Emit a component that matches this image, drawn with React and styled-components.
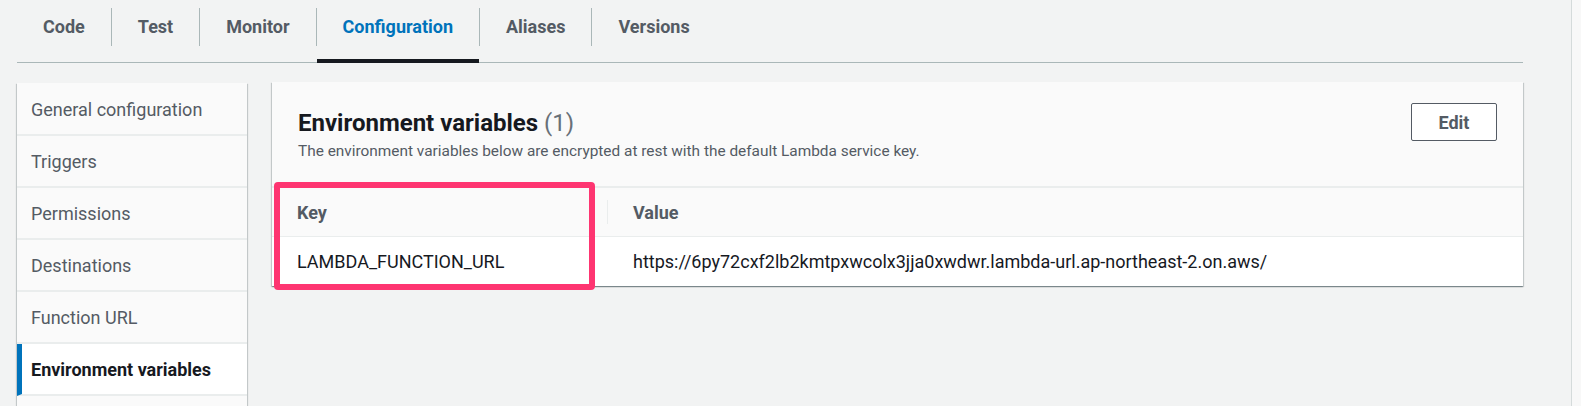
import React from 'react';
import styled, { createGlobalStyle } from 'styled-components';

const tabs = ['Code', 'Test', 'Monitor', 'Configuration', 'Aliases', 'Versions'];

const menu = [
  'General configuration',
  'Triggers',
  'Permissions',
  'Destinations',
  'Function URL',
  'Environment variables',
];

const variables = [
  {
    key: 'LAMBDA_FUNCTION_URL',
    value: 'https://6py72cxf2lb2kmtpxwcolx3jja0xwdwr.lambda-url.ap-northeast-2.on.aws/',
  },
];

function App() {
  return (
    <>
      <GlobalStyle />
      <Layout>
        <Main>
          <TabBar>
            {tabs.map((tab, i) => (
              <React.Fragment key={tab}>
                {i > 0 && <TabDivider />}
                <Tab $active={tab === 'Configuration'}>{tab}</Tab>
              </React.Fragment>
            ))}
          </TabBar>

          <Body>
            <Sidebar>
              {menu.map((item) => (
                <MenuItem key={item} $active={item === 'Environment variables'}>
                  {item}
                </MenuItem>
              ))}
            </Sidebar>

            <Panel>
              <PanelHeader>
                <TitleBlock>
                  <Title>
                    Environment variables <Count>(1)</Count>
                  </Title>
                  <Description>
                    The environment variables below are encrypted at rest with the default Lambda service key.
                  </Description>
                </TitleBlock>
                <EditButton>Edit</EditButton>
              </PanelHeader>

              <Table>
                <HeaderRow>
                  <KeyCell>Key</KeyCell>
                  <ColDivider />
                  <HeadValueCell>Value</HeadValueCell>
                </HeaderRow>
                {variables.map((v) => (
                  <Row key={v.key}>
                    <KeyCell>{v.key}</KeyCell>
                    <ValueCell>{v.value}</ValueCell>
                  </Row>
                ))}
                {/* annotation box drawn over the key column */}
                <Highlight />
              </Table>
            </Panel>
          </Body>
        </Main>
        <Rail />
      </Layout>
    </>
  );
}

const GlobalStyle = createGlobalStyle`
  html, body {
    margin: 0;
    padding: 0;
    background: #f2f3f3;
    font-family: Roboto, "Liberation Sans", Arial, sans-serif;
    color: #16191f;
  }
  * {
    box-sizing: border-box;
  }
`;

const shadow = `
  0 1px 1px 0 rgba(0, 28, 36, 0.3),
  1px 1px 1px 0 rgba(0, 28, 36, 0.15),
  -1px 1px 1px 0 rgba(0, 28, 36, 0.15)
`;

const Layout = styled.div`
  display: flex;
  height: 406px;
  overflow: hidden;
`;

const Main = styled.div`
  width: 1506px;
  margin-left: 17px;
  flex-shrink: 0;
`;

const Rail = styled.div`
  margin-left: auto;
  width: 10px;
  border-left: 1px solid #d5dbdb;
  background: #f8f8f8;
`;

const TabBar = styled.div`
  display: flex;
  align-items: flex-start;
  height: 63px;
  border-bottom: 1px solid #aab7b8;
`;

const TabDivider = styled.div`
  width: 1px;
  height: 38px;
  margin-top: 8px;
  background: #aab7b8;
  flex-shrink: 0;
`;

const Tab = styled.div`
  display: flex;
  align-items: center;
  height: 63px;
  margin-bottom: -1px;
  padding: 0 26px 6px;
  font-size: 18px;
  font-weight: 700;
  color: ${(p) => (p.$active ? '#0073bb' : '#545b64')};
  border-bottom: 4px solid ${(p) => (p.$active ? '#16191f' : 'transparent')};
`;

const Body = styled.div`
  display: flex;
  align-items: flex-start;
  gap: 25px;
  margin-top: 20px;
`;

const Sidebar = styled.div`
  width: 230px;
  flex-shrink: 0;
  padding: 1px 0 60px;
  background: #fafafa;
  box-shadow: ${shadow};
`;

const MenuItem = styled.div`
  display: flex;
  align-items: center;
  height: 52px;
  padding-left: ${(p) => (p.$active ? '9px' : '14px')};
  border-bottom: 2px solid #eaeded;
  border-left: ${(p) => (p.$active ? '5px solid #0073bb' : 'none')};
  background: ${(p) => (p.$active ? '#ffffff' : '#fafafa')};
  font-size: 18px;
  font-weight: ${(p) => (p.$active ? 700 : 400)};
  color: ${(p) => (p.$active ? '#16191f' : '#545b64')};
`;

const Panel = styled.div`
  flex: 1;
  margin-top: -1px;
  background: #fafafa;
  box-shadow: ${shadow};
`;

const PanelHeader = styled.div`
  display: flex;
  justify-content: space-between;
  align-items: flex-start;
  padding: 21px 26px 25px;
`;

const TitleBlock = styled.div`
  margin-top: 6px;
`;

const Title = styled.h2`
  margin: 0;
  font-size: 24px;
  line-height: 28px;
  font-weight: 700;
  color: #16191f;
`;

const Count = styled.span`
  font-weight: 400;
  color: #687078;
`;

const Description = styled.div`
  margin-top: 4px;
  font-size: 15.4px;
  line-height: 20px;
  color: #545b64;
`;

const EditButton = styled.button`
  width: 86px;
  height: 38px;
  border: 1px solid #545b64;
  border-radius: 2px;
  background: #ffffff;
  font-family: inherit;
  font-size: 18px;
  font-weight: 700;
  color: #545b64;
`;

const Table = styled.div`
  position: relative;
  border-top: 2px solid #eaeded;
`;

const HeaderRow = styled.div`
  display: flex;
  align-items: center;
  height: 49px;
  border-bottom: 1px solid #eaeded;
  background: #fafafa;
  font-size: 18px;
  font-weight: 700;
  color: #545b64;
`;

const Row = styled.div`
  display: flex;
  align-items: center;
  height: 49px;
  background: #ffffff;
  font-size: 18px;
  color: #16191f;
`;

const KeyCell = styled.div`
  width: 335px;
  padding-left: 25px;
  flex-shrink: 0;
`;

const ColDivider = styled.div`
  width: 1px;
  height: 24px;
  background: #eaeded;
`;

const HeadValueCell = styled.div`
  padding-left: 25px;
`;

const ValueCell = styled.div`
  padding-left: 26px;
`;

const Highlight = styled.div`
  position: absolute;
  left: 2px;
  top: -6px;
  width: 321px;
  height: 108px;
  border: 6px solid #fe3571;
  border-radius: 4px;
  pointer-events: none;
`;

export default App;
